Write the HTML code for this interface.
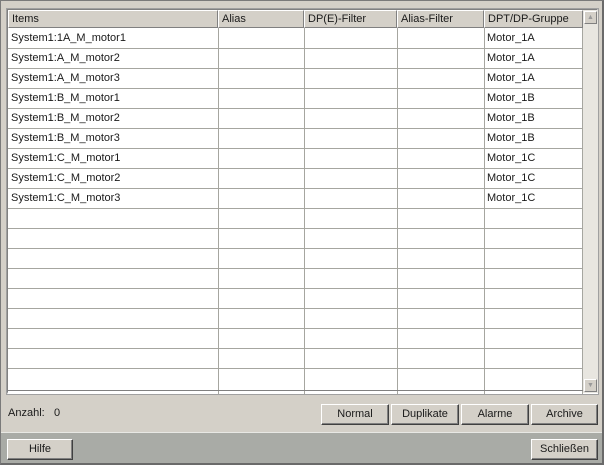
<!DOCTYPE html><html><head><style>
*{margin:0;padding:0;box-sizing:border-box}
body{width:604px;height:465px;background:#d4d0c8;font-family:"Liberation Sans",sans-serif;font-size:11px;color:#1a1a1a;position:relative;overflow:hidden}
.frame{position:absolute;left:0;top:0;width:604px;height:465px;border:1px solid #7a7a7a;border-right:2px solid #6a6a6a;border-bottom:2px solid #6a6a6a}
.bot{position:absolute;left:1px;top:432px;width:601px;height:31px;background:#a9aba6;border-top:1px solid #e8e8e4}
.tbl{position:absolute;left:7px;top:9px;width:591px;height:385px;border:1px solid #808080;border-right:1px solid #fff;border-bottom:2px solid #fff;background:#fff;outline:1px solid #a0a0a0}
.hd{position:absolute;top:0;height:18px;background:#d4d0c8;border-right:1px solid #808080;border-bottom:1px solid #808080;border-left:1px solid #fff;border-top:1px solid #fff;padding:2px 0 0 3px;white-space:nowrap}
.vl{position:absolute;top:18px;width:1px;height:366px;background:#a6a6a0}
.hl{position:absolute;left:0;width:575px;height:1px;background:#a6a6a0}
.c{position:absolute;height:20px;line-height:20px;padding-left:3px;white-space:nowrap}
.sb{position:absolute;left:575px;top:0;width:15px;height:383px;background:#e8e6e0}
.ar{position:absolute;left:1px;width:13px;height:13px;background:#d4d0c8;border:1px solid;border-color:#fff #808080 #808080 #fff;font-size:7px;color:#999;text-align:center;line-height:11px}
.btn{position:absolute;height:21px;background:#d4d0c8;border:1px solid;border-color:#fff #404040 #404040 #fff;box-shadow:inset -1px -1px 0 #808080;text-align:center;line-height:19px}
</style></head><body>
<div class="frame"></div>
<div class="tbl">
<div class="hd" style="left:0;width:210px">Items</div>
<div class="hd" style="left:210px;width:86px">Alias</div>
<div class="hd" style="left:296px;width:93px">DP(E)-Filter</div>
<div class="hd" style="left:389px;width:87px">Alias-Filter</div>
<div class="hd" style="left:476px;width:99px">DPT/DP-Gruppe</div>
<div class="vl" style="left:210px"></div><div class="vl" style="left:296px"></div><div class="vl" style="left:389px"></div><div class="vl" style="left:476px"></div><div class="vl" style="left:574px"></div>
<div class="hl" style="top:38px"></div><div class="hl" style="top:58px"></div><div class="hl" style="top:78px"></div><div class="hl" style="top:98px"></div><div class="hl" style="top:118px"></div><div class="hl" style="top:138px"></div><div class="hl" style="top:158px"></div><div class="hl" style="top:178px"></div><div class="hl" style="top:198px"></div><div class="hl" style="top:218px"></div><div class="hl" style="top:238px"></div><div class="hl" style="top:258px"></div><div class="hl" style="top:278px"></div><div class="hl" style="top:298px"></div><div class="hl" style="top:318px"></div><div class="hl" style="top:338px"></div><div class="hl" style="top:358px"></div><div class="hl" style="top:380px;background:#808080"></div>
<div class="c" style="left:0;top:18px">System1:1A_M_motor1</div><div class="c" style="left:476px;top:18px">Motor_1A</div>
<div class="c" style="left:0;top:38px">System1:A_M_motor2</div><div class="c" style="left:476px;top:38px">Motor_1A</div>
<div class="c" style="left:0;top:58px">System1:A_M_motor3</div><div class="c" style="left:476px;top:58px">Motor_1A</div>
<div class="c" style="left:0;top:78px">System1:B_M_motor1</div><div class="c" style="left:476px;top:78px">Motor_1B</div>
<div class="c" style="left:0;top:98px">System1:B_M_motor2</div><div class="c" style="left:476px;top:98px">Motor_1B</div>
<div class="c" style="left:0;top:118px">System1:B_M_motor3</div><div class="c" style="left:476px;top:118px">Motor_1B</div>
<div class="c" style="left:0;top:138px">System1:C_M_motor1</div><div class="c" style="left:476px;top:138px">Motor_1C</div>
<div class="c" style="left:0;top:158px">System1:C_M_motor2</div><div class="c" style="left:476px;top:158px">Motor_1C</div>
<div class="c" style="left:0;top:178px">System1:C_M_motor3</div><div class="c" style="left:476px;top:178px">Motor_1C</div>
<div class="sb"><div class="ar" style="top:1px">▲</div><div class="ar" style="top:369px">▼</div></div>
</div>
<div style="position:absolute;left:8px;top:407px">Anzahl:</div>
<div style="position:absolute;left:54px;top:407px">0</div>
<div class="btn" style="left:321px;top:404px;width:68px">Normal</div>
<div class="btn" style="left:391px;top:404px;width:68px">Duplikate</div>
<div class="btn" style="left:461px;top:404px;width:68px">Alarme</div>
<div class="btn" style="left:531px;top:404px;width:67px">Archive</div>
<div class="bot"></div>
<div class="btn" style="left:7px;top:439px;width:66px">Hilfe</div>
<div class="btn" style="left:531px;top:439px;width:67px">Schließen</div>
</body></html>
